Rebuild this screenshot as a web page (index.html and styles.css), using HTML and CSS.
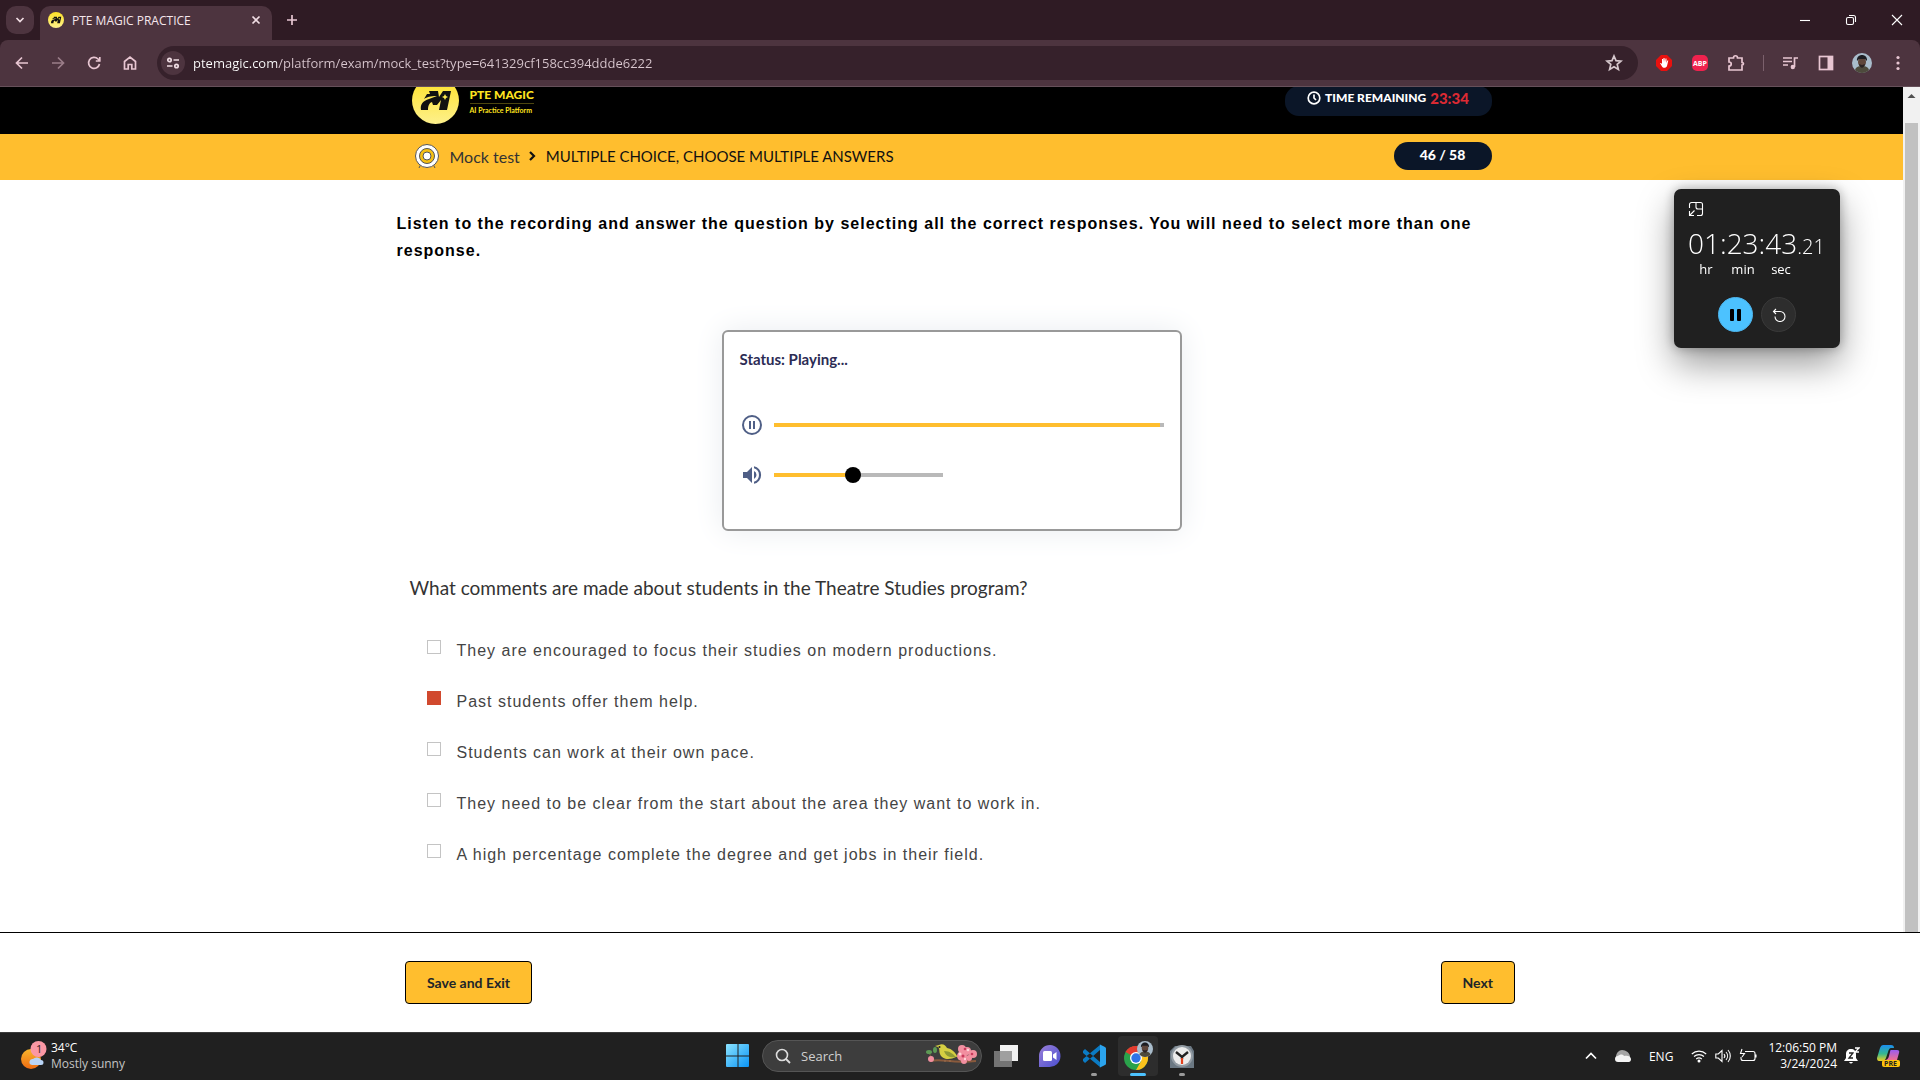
FILE: index.html
```html
<!DOCTYPE html>
<html lang="en">
<head>
<meta charset="utf-8">
<title>PTE MAGIC PRACTICE</title>
<link rel="stylesheet" href="styles.css">
</head>
<body>
<svg class="defs" width="0" height="0" aria-hidden="true">
  <defs>
    <linearGradient id="gold" x1="0" y1="0" x2="0" y2="1"><stop offset="0" stop-color="#ffe227"/><stop offset="1" stop-color="#fdf08c"/></linearGradient>
    <linearGradient id="win" x1="0" y1="0" x2="1" y2="1"><stop offset="0" stop-color="#8be3ff"/><stop offset="1" stop-color="#0a94f5"/></linearGradient>
    <linearGradient id="sun" x1="0" y1="0" x2="0" y2="1"><stop offset="0" stop-color="#f8b62d"/><stop offset="1" stop-color="#ee6b12"/></linearGradient>
    <linearGradient id="chat" x1="0" y1="0" x2="1" y2="1"><stop offset="0" stop-color="#9a7fd8"/><stop offset="1" stop-color="#4a4fd0"/></linearGradient>
    <linearGradient id="cpa" x1="0" y1="0" x2="0" y2="1"><stop offset="0" stop-color="#1b8ef0"/><stop offset=".55" stop-color="#35b890"/><stop offset="1" stop-color="#f0d020"/></linearGradient>
    <linearGradient id="cpb" x1="0" y1="0" x2="0" y2="1"><stop offset="0" stop-color="#9a5cf0"/><stop offset="1" stop-color="#f07090"/></linearGradient>
    <symbol id="logo" viewBox="0 0 47 47">
      <circle cx="23.500" cy="23.500" r="23.500" fill="url(#gold)"/>
      <path d="M17 14h9l1 6 4-6h8l-4 19h-8l2-10-4 5h-4l-1-3c-3 1-4 4-4 8H9c-1-6 2-9 8-11l8-3c-7 0-10 1-13 3l3-5h3z" fill="#111"/>
      <path d="M33 17l1 2 2 1-2 1-1 2-1-2-2-1 2-1z" fill="#fde94f"/>
    </symbol>
    <symbol id="person" viewBox="0 0 20 20">
      <circle cx="10" cy="10" r="10" fill="#a9bccb"/>
      <path d="M3 17c1-3 3-4 7-4s6 1 7 4c-4 4-10 4-14 0z" fill="#4d4a3c"/>
      <ellipse cx="10" cy="9" rx="4" ry="5" fill="#5e463b"/>
      <path d="M5 8c-1-8 11-8 10 0l-2-2H7z" fill="#1c1d22"/>
      <path d="M7 11c1 5 5 5 6 0l-3 1z" fill="#2a2324"/>
    </symbol>
  </defs>
</svg>

<header class="browser">
  <div class="tabstrip">
    <button class="tab-search" aria-label="Search tabs"><svg width="10" height="10" viewBox="0 0 10 10"><path d="M1.500 3L5 6.500 8.500 3" class="ln2"/></svg></button>
    <div class="tab">
      <svg width="16" height="16"><use href="#logo"/></svg>
      <span class="tab-title">PTE MAGIC PRACTICE</span>
      <button class="bare" aria-label="Close tab"><svg width="10" height="10" viewBox="0 0 10 10"><path d="M1.500 1.500l7 7m0-7l-7 7" class="ln2"/></svg></button>
    </div>
    <button class="bare new-tab" aria-label="New tab"><svg width="12" height="12" viewBox="0 0 12 12"><path d="M6 1v10M1 6h10" class="ln2 pink"/></svg></button>
    <div class="window-buttons">
      <button class="bare" aria-label="Minimize"><svg width="12" height="12" viewBox="0 0 12 12"><path d="M1 6.500h10" class="ln1"/></svg></button>
      <button class="bare" aria-label="Restore"><svg width="12" height="12" viewBox="0 0 12 12"><rect x="1.500" y="3.500" width="7" height="7" rx="1.500" class="ln1"/><path d="M4 1.500h4.500a2 2 0 0 1 2 2V8" class="ln1"/></svg></button>
      <button class="bare" aria-label="Close"><svg width="12" height="12" viewBox="0 0 12 12"><path d="M1 1l10 10M11 1L1 11" class="ln1"/></svg></button>
    </div>
  </div>
  <div class="toolbar">
    <div class="nav">
      <button class="bare" aria-label="Back"><svg width="16" height="16" viewBox="0 0 16 16"><path d="M14 8H3m5-5.500L2.500 8 8 13.500" class="ln2 pink"/></svg></button>
      <button class="bare dim" aria-label="Forward"><svg width="16" height="16" viewBox="0 0 16 16"><path d="M2 8h11M8 2.500L13.500 8 8 13.500" class="ln2 pink"/></svg></button>
      <button class="bare" aria-label="Reload"><svg width="16" height="16" viewBox="0 0 16 16"><path d="M13.500 9A5.500 5.500 0 1 1 12 4l1.500 1.500M13.800 2v4h-4" class="ln2 pink"/></svg></button>
      <button class="bare" aria-label="Home"><svg width="16" height="16" viewBox="0 0 16 16"><path d="M2.500 14V6.500L8 2l5.500 4.500V14h-3.700V9.500H6.200V14z" class="ln2 pink"/></svg></button>
    </div>
    <div class="omnibox">
      <button class="site-info" aria-label="Site information"><svg width="14" height="14" viewBox="0 0 14 14"><circle cx="3.500" cy="4" r="1.700" class="ln2"/><path d="M7.500 4H13M1 10h5.500" class="ln2"/><circle cx="10.500" cy="10" r="1.700" class="ln2"/></svg></button>
      <input class="url" type="text" aria-label="Address" value="ptemagic.com/platform/exam/mock_test?type=641329cf158cc394ddde6222">
      <button class="bare" aria-label="Bookmark"><svg width="18" height="18" viewBox="0 0 18 18"><path d="M9 2l2 4.700 5 .4-3.800 3.300 1.200 5L9 12.700l-4.400 2.700 1.200-5L2 7.100l5-.4z" class="ln2 grey"/></svg></button>
    </div>
    <div class="extensions">
      <button class="bare" aria-label="Ad blocker"><svg width="16" height="16" viewBox="0 0 16 16"><path d="M5 0h6l5 5v6l-5 5H5l-5-5V5z" fill="#e8110f"/><path d="M4 8l1 0 1 1V4h1v3l.5-4h1L9 7l.5-3.500h1V8l.8-2.500h1L11 11c-.6 2-4 2.500-5 .500z" fill="#fff"/></svg></button>
      <button class="bare abp">ABP</button>
      <button class="bare" aria-label="Extensions"><svg width="18" height="18" viewBox="0 0 18 18"><path d="M2 4h4.500c0-3 4-3 4 0H15v4.500c2 0 2 2.500 0 2.500v5H2v-4c3 0 3-4 0-4z" class="ln2 pink"/></svg></button>
      <span class="divider"></span>
      <button class="bare" aria-label="Media"><svg width="16" height="16" viewBox="0 0 16 16"><path d="M1 3h9M1 6.500h9M1 10h5M12.500 12V3H16" class="ln2 pink"/><circle cx="10.800" cy="12" r="2.200" fill="#e8c6d2"/></svg></button>
      <button class="bare" aria-label="Side panel"><svg width="16" height="16" viewBox="0 0 16 16"><rect x="1.500" y="1.500" width="13" height="13" class="ln2 pink"/><path d="M9.500 1H15v14H9.500z" fill="#e8c6d2"/></svg></button>
      <button class="bare" aria-label="Profile"><svg width="20" height="20"><use href="#person"/></svg></button>
      <button class="bare" aria-label="Menu"><svg width="16" height="16" viewBox="0 0 16 16" fill="#e8c6d2"><circle cx="8" cy="2.500" r="1.600"/><circle cx="8" cy="8" r="1.600"/><circle cx="8" cy="13.500" r="1.600"/></svg></button>
    </div>
  </div>
</header>

<div class="viewport">
  <div class="page">
    <div class="site-header">
      <div class="wrap">
        <a class="brand" href="#">
          <svg width="47" height="47"><use href="#logo"/></svg>
          <span class="brand-text"><span class="brand-name">PTE MAGIC</span><span class="brand-sub">AI Practice Platform</span></span>
        </a>
        <div class="pill timer">
          <svg width="14" height="14" viewBox="0 0 14 14"><circle cx="7" cy="7" r="5.800" class="ln2 white"/><path d="M7 3.500V7l2 2" class="ln2 white"/></svg>
          <span>TIME REMAINING</span><span class="time-left">23:34</span>
        </div>
      </div>
    </div>
    <nav class="crumbs">
      <div class="wrap">
        <svg width="28" height="26" viewBox="0 0 28 26"><path d="M8 21l-2 4M20 21l2 4" stroke="#555" fill="none"/><g stroke="#555"><circle cx="14" cy="13" r="11.500" fill="#fff"/><circle cx="14" cy="13" r="7.500" fill="#f5bf12"/><circle cx="14" cy="13" r="4" fill="#fff"/></g></svg>
        <a href="#">Mock test</a>
        <svg class="chev" width="8" height="10" viewBox="0 0 8 10"><path d="M2 1l4 4-4 4" fill="none" stroke="#111" stroke-width="2.200"/></svg>
        <span class="task-name">MULTIPLE CHOICE, CHOOSE MULTIPLE ANSWERS</span>
        <span class="pill count">46 / 58</span>
      </div>
    </nav>
    <main class="content">
      <h1 class="instruction">Listen to the recording and answer the question by selecting all the correct responses. You will need to select more than one response.</h1>
      <section class="player" aria-label="Audio player">
        <p class="status">Status: Playing...</p>
        <div class="player-row">
          <button class="bare" aria-label="Pause"><svg width="24" height="24" viewBox="0 0 24 24"><circle cx="12" cy="12" r="9" fill="none" stroke="#4f5f86" stroke-width="2"/><path d="M9 8h2v8H9zM13 8h2v8h-2z" fill="#4f5f86"/></svg></button>
          <progress class="track" max="100" value="99" aria-label="Playback"></progress>
        </div>
        <div class="player-row">
          <button class="bare" aria-label="Mute"><svg width="24" height="24" viewBox="0 0 24 24" fill="#4f5f86"><path d="M3 9v6h4l5 5V4L7 9zm13.500 3A4.500 4.500 0 0 0 14 8v8a4.500 4.500 0 0 0 2.500-4zM14 3.200v2.100a7 7 0 0 1 0 13.400v2.100a9 9 0 0 0 0-17.600z"/></svg></button>
          <input class="volume" type="range" min="0" max="100" value="47" aria-label="Volume">
        </div>
      </section>
      <fieldset class="question">
        <legend>What comments are made about students in the Theatre Studies program?</legend>
        <label><input type="checkbox"><span>They are encouraged to focus their studies on modern productions.</span></label>
        <label><input type="checkbox" checked><span>Past students offer them help.</span></label>
        <label><input type="checkbox"><span>Students can work at their own pace.</span></label>
        <label><input type="checkbox"><span>They need to be clear from the start about the area they want to work in.</span></label>
        <label><input type="checkbox"><span>A high percentage complete the degree and get jobs in their field.</span></label>
      </fieldset>
    </main>
  </div>
  <div class="scrollbar" aria-hidden="true">
    <svg width="17" height="36" viewBox="0 0 17 36"><path d="M4.500 11l4-4 4 4z" fill="#505050"/></svg>
    <div class="thumb"></div>
  </div>
</div>

<footer class="actions">
  <div class="actions-inner">
    <button class="action">Save and Exit</button>
    <button class="action">Next</button>
  </div>
</footer>

<aside class="stopwatch" aria-label="Stopwatch">
  <button class="bare" aria-label="Back to full view"><svg width="16" height="16" viewBox="0 0 16 16"><path d="M1.500 7V3.500a2 2 0 0 1 2-2h9a2 2 0 0 1 2 2v9a2 2 0 0 1-2 2H9M8 1.500V6a2 2 0 0 0 2 2h4.500M1.500 10v4.500H6M2 14l4.500-4.500" class="ln1"/></svg></button>
  <div class="clock">01:23:43<span>.21</span></div>
  <div class="units"><span>hr</span><span>min</span><span>sec</span></div>
  <div class="sw-buttons">
    <button class="round blue" aria-label="Pause stopwatch"><svg width="14" height="14" viewBox="0 0 14 14"><rect x="1" y="1" width="4" height="12" rx="1"/><rect x="8" y="1" width="4" height="12" rx="1"/></svg></button>
    <button class="round" aria-label="Reset stopwatch"><svg width="14" height="14" viewBox="0 0 14 14"><path d="M1.500 3.500H8a5 5 0 1 1-5 5M4 1L1.500 3.500 4 6" class="ln1"/></svg></button>
  </div>
</aside>

<div class="taskbar">
  <button class="bare weather">
    <svg width="26" height="30" viewBox="0 0 26 30"><circle cx="10" cy="18" r="10" fill="url(#sun)"/><path d="M11 24a3 3 0 0 1 1-6 5 5 0 0 1 8 1 2.500 2.500 0 0 1 0 5z" fill="#b9d4f6"/><circle cx="17.500" cy="8" r="8" fill="#fb98a4"/><text x="15" y="12" font-size="11" fill="#3a1a20">1</text></svg>
    <span class="two-lines"><span>34°C</span><span class="soft">Mostly sunny</span></span>
  </button>
  <div class="apps">
    <button class="app" aria-label="Start"><svg width="24" height="24" viewBox="0 0 24 24" fill="url(#win)"><path d="M1 0h10.500v11.500H0V1q0-1 1-1zM12.500 0H22q1 0 1 1v10.500H12.500zM0 12.500h11.500V23H1q-1 0-1-1zM12.500 12.500H23V22q0 1-1 1h-9.500z"/></svg></button>
    <label class="search">
      <svg width="16" height="16" viewBox="0 0 16 16"><circle cx="7" cy="7" r="5.500" fill="none" stroke="#ddd" stroke-width="1.600"/><path d="M11 11l4 4" stroke="#ddd" stroke-width="1.800"/></svg>
      <input type="text" placeholder="Search" aria-label="Search">
      <svg width="52" height="24" viewBox="0 0 52 24"><path d="M4 17c14-3 20 3 46 0" fill="none" stroke="#8a5a3c" stroke-width="2"/><path d="M9 17C5 13 4 10 2 8" fill="none" stroke="#7c6840"/><g fill="#5d9a55"><ellipse cx="3" cy="8" rx="3" ry="2"/><ellipse cx="9" cy="6" rx="2" ry="3"/></g><path d="M9 2l4-1c4-2 7 1 8 3 5 1 8 4 10 8l2 0-3 1c-6 3-14 3-16-3-1-3 0-5-2-7z" fill="#d6cf42"/><path d="M18 7c6 0 9 3 12 6-5 1-10 0-12-6z" fill="#8f9a35"/><path d="M19 16v2M24 16v2" stroke="#9a7050"/><circle cx="13.500" cy="3" r="1" fill="#222"/><g fill="#f28fa0"><circle cx="5" cy="15" r="3"/><circle cx="36" cy="5" r="4"/><circle cx="41" cy="7" r="4"/><circle cx="36" cy="12" r="5"/><circle cx="47" cy="10" r="4"/><circle cx="43" cy="14" r="3"/><circle cx="38" cy="17" r="3"/></g><g fill="#c93a5c"><circle cx="37" cy="12" r="1.500"/><circle cx="39" cy="5" r="1.300"/><circle cx="46" cy="10" r="1.300"/></g><g fill="#ffd4d8"><circle cx="34" cy="10" r="1.500"/><circle cx="42" cy="6" r="1.300"/><circle cx="39" cy="15" r="1.200"/></g></svg>
    </label>
    <button class="app" aria-label="Task view"><svg width="24" height="24" viewBox="0 0 24 24"><rect x="6" y="1" width="18" height="16" fill="#f2f2f2"/><rect x="0" y="7" width="18" height="16" fill="#8a8a8a" fill-opacity=".8"/></svg></button>
    <button class="app" aria-label="Chat"><svg width="24" height="24" viewBox="0 0 24 24"><path d="M12 1a11 11 0 1 1-1 22H1V12A11 11 0 0 1 12 1z" fill="url(#chat)"/><rect x="5" y="7" width="9" height="10" rx="1.500" fill="#fff"/><path d="M15 10.500l3.500-2.500v8L15 13.500z" fill="#fff"/></svg></button>
    <button class="app running" aria-label="Visual Studio Code"><svg width="24" height="24" viewBox="0 0 24 24"><path d="M1 7l2-2 15 13v5L1 9zM1 17l2 2L18 6V1L1 15z" fill="#0b7bc4"/><path d="M17 0l6 3q1 .5 1 1.500v15q0 1-1 1.500l-6 3c1 0 1-1 1-2V2c0-1 0-2-1-2z" fill="#2ba4ee"/></svg></button>
    <button class="app running active" aria-label="Chrome"><svg width="30" height="30" viewBox="0 0 30 30"><circle cx="13" cy="17" r="12" fill="#2aa24b"/><path d="M13 17L2.600 11A12 12 0 0 1 23.400 11z" fill="#e33b2e"/><path d="M2.600 11A12 12 0 0 1 13 5a12 12 0 0 1 10.400 6H13z" fill="#e33b2e"/><path d="M13 11h10.400A12 12 0 0 1 13 29l5.200-9z" fill="#fcc31d"/><circle cx="13" cy="17" r="6" fill="#fff"/><circle cx="13" cy="17" r="4.700" fill="#2f73e6"/><use href="#person" x="14" y="0" width="16" height="16"/></svg></button>
    <button class="app running" aria-label="Clock"><svg width="24" height="24" viewBox="0 0 24 24"><path d="M5 2h16l3 5v17H0V7z" fill="#6b7883"/><circle cx="12" cy="12" r="11" fill="#929ba3"/><circle cx="12" cy="12" r="9" fill="#ececec"/><path d="M6 8l6 5 6-5M12 12v3" stroke="#222" stroke-width="2.400" fill="none"/><path d="M12 14v6" stroke="#e2401c" stroke-width="2.200"/></svg></button>
  </div>
  <div class="tray">
    <button class="bare" aria-label="Hidden icons"><svg width="12" height="12" viewBox="0 0 12 12"><path d="M1 8.500l5-5 5 5" class="ln2 white"/></svg></button>
    <svg width="16" height="12" viewBox="0 0 16 12"><path d="M1 7C1 3 4 0 7 0c4 0 8 3 8 7z" fill="#a5a5a5"/><path d="M3 12a3 3 0 0 1 0-6c2-2 5-2 6 0 3-1 7 0 7 3s-2 3-3 3z" fill="#f4f4f4"/></svg>
    <span class="lang">ENG</span>
    <button class="bare status-icons" aria-label="Network, volume, battery">
      <svg width="16" height="16" viewBox="0 0 16 16"><path d="M.8 6a10.500 10.500 0 0 1 14.400 0M3 8.500a7.500 7.500 0 0 1 10 0M5.200 11a4.500 4.500 0 0 1 5.600 0" class="ln1"/><circle cx="8" cy="13" r="1.500" fill="#fff"/></svg>
      <svg width="16" height="16" viewBox="0 0 16 16"><path d="M.8 6v4h2.500L7 13.500v-11L3.300 6zM9 6a3 3 0 0 1 0 4M11 4a6 6 0 0 1 0 8M13 2a9 9 0 0 1 0 12" class="ln1"/></svg>
      <svg width="18" height="16" viewBox="0 0 18 16"><path d="M6 3.500h8a2 2 0 0 1 2 2v5a2 2 0 0 1-2 2H4a2 2 0 0 1-2-2V9M17 6.500v3M3 1L1.500 5.500h4L3 9" class="ln1"/></svg>
    </button>
    <button class="bare two-lines date"><span>12:06:50 PM</span><span>3/24/2024</span></button>
    <svg width="16" height="18" viewBox="0 0 16 18"><path d="M7 2c-3 0-5 2-5 5v4l-2 3h14l-2-3V7c0-3-2-5-5-5zM5 15h4q-2 3-4 0z" fill="#fff"/><path d="M5 6h4l-4 5h4" stroke="#222" fill="none" stroke-width="1.300"/><path d="M11 1h4l-4 4h4" stroke="#fff" fill="none" stroke-width="1.300"/></svg>
    <button class="bare copilot" aria-label="Copilot"><svg width="24" height="24" viewBox="0 0 24 24"><path d="M6 1h8q3 0 3 3l-3 0q-2 0-3 4l-2 6q-1 3-4 3H2q-2 0-2-3L3 4q1-3 3-3z" fill="url(#cpa)"/><path d="M14 6h6q3 0 2 3l-2 7H8q3 0 4-4l1-4q0-2 1-2z" fill="url(#cpb)"/><rect x="5" y="16" width="18" height="7" rx="2" fill="#ffc40c"/><text x="7" y="22" font-size="7" font-weight="700" fill="#222">PRE</text></svg></button>
  </div>
</div>
</body>
</html>
```
FILE: styles.css
```css
* { box-sizing: border-box; }
body {
  margin: 0;
  min-height: 100vh;
  display: flex;
  flex-direction: column;
  background: #fff;
  color: #212529;
  font-family: "Open Sans", "Noto Sans", sans-serif;
  font-size: 12px;
}
.defs { position: absolute; }
svg { display: block; flex: none; }
button, input { font: inherit; color: inherit; }
.bare { border: 0; padding: 0; background: none; display: flex; align-items: center; justify-content: center; }
.ln1 { fill: none; stroke: #fff; stroke-width: 1.1; }
.ln2 { fill: none; stroke: #f0dde4; stroke-width: 1.7; }
.pink { stroke: #e8c6d2; }
.grey { stroke: #d6c8cd; }
.white { stroke: #fff; }

/* Browser frame */
.browser { background: #2f1b24; color: #f5e6ec; }
.tabstrip { display: flex; align-items: center; height: 40px; padding: 6px 0 0 6px; }
.tab-search { align-self: flex-start; width: 28px; height: 28px; border: 0; border-radius: 10px; background: #4d343f; display: flex; align-items: center; justify-content: center; padding: 0; }
.tab { display: flex; align-items: center; gap: 8px; width: 232px; height: 34px; margin-left: 6px; padding: 0 11px 6px 8px; border-radius: 10px 10px 0 0; background: #4d343f; }
.tab-title { flex: 1; }
.new-tab { width: 28px; height: 28px; margin: 0 0 6px 6px; }
.window-buttons { margin-left: auto; display: flex; padding-bottom: 6px; }
.window-buttons .bare { width: 46px; height: 28px; }
.toolbar { display: flex; align-items: center; height: 47px; background: #4d343f; border-bottom: 1px solid #66505a; border-radius: 8px 8px 0 0; }
.nav { display: flex; gap: 20px; padding: 0 19px 0 14px; }
.dim { opacity: .5; }
.omnibox { flex: 1; display: flex; align-items: center; height: 34px; padding: 0 15px 0 4px; border-radius: 17px; background: #36212b; }
.site-info { width: 24px; height: 24px; border: 0; padding: 0; border-radius: 12px; background: #4d343f; display: flex; align-items: center; justify-content: center; }
.url { flex: 1; border: 0; padding: 0 0 0 8px; font-size: 13px; color: transparent; background: linear-gradient(90deg, #fff 92px, #d9c7cf 92px); background-clip: text; -webkit-background-clip: text; }
.extensions { display: flex; align-items: center; padding: 0 4px 0 8px; }
.extensions .bare { width: 36px; }
.extensions .abp { width: 16px; height: 16px; margin: 0 10px; border-radius: 5px; background: #f0224e; color: #fff; font-size: 7px; font-weight: 700; }
.divider { width: 1px; height: 16px; margin: 0 8px 0 9px; background: #7b606c; }

/* Scrolled web page */
.viewport { flex: 1; display: flex; }
.page { flex: 1; font-family: Lato, sans-serif; }
.wrap { display: flex; width: 100%; max-width: 1080px; margin: 0 auto; }
.site-header { height: 47px; overflow: hidden; display: flex; align-items: flex-end; background: #000; }
.site-header .wrap { align-items: center; justify-content: space-between; padding-bottom: 10px; }
.brand { display: flex; align-items: center; gap: 11px; color: #ffe41f; text-decoration: none; }
.brand-text { display: flex; flex-direction: column; padding-top: 2px; }
.brand-name { font-size: 12px; line-height: 15px; font-weight: 900; padding-bottom: 1px; border-bottom: 1px solid #4d460f; }
.brand-sub { font-size: 7px; line-height: 13px; font-weight: 700; }
.pill { display: flex; align-items: center; justify-content: center; gap: 4px; height: 28px; padding-bottom: 3px; border-radius: 14px; background: #0b1628; color: #fff; font-size: 12px; font-weight: 900; }
.timer { width: 207px; height: 30px; padding-bottom: 6px; }
.time-left { color: #dc2a33; font-size: 15px; }
.crumbs { background: #ffbe2e; color: #111; font-size: 16px; }
.crumbs .wrap { align-items: center; height: 46px; padding-left: 1px; padding-bottom: 2px; }
.crumbs a { color: #333; text-decoration: none; margin-left: 9px; }
.crumbs .chev { margin: 0 10px 0 8px; }
.crumbs .task-name { font-size: 15px; }
.count { width: 98px; margin-left: auto; font-size: 14px; }
.content { max-width: 1110px; margin: 0 auto; padding: 30px 0; font-family: "Liberation Sans", Arial, sans-serif; }
.instruction { margin: 0 0 66px; font-size: 16px; line-height: 27px; font-weight: 700; letter-spacing: 1px; color: #000; }
.player { max-width: 460px; height: 201px; margin: 0 auto; padding: 15px 16px; border: 2px solid #999; border-radius: 6px; background: #fff; box-shadow: 0 0 30px #e9ecf0; font-family: Lato, sans-serif; }
.status { margin: 0 0 42px; font-size: 15px; line-height: 24px; font-weight: 700; color: #2c2c54; }
.player-row { display: flex; align-items: center; gap: 10px; height: 24px; margin-bottom: 26px; }
.track { flex: 1; height: 4px; border: 0; appearance: none; -webkit-appearance: none; }
.track::-webkit-progress-bar { background: #b9b9b9; }
.track::-webkit-progress-value { background: #ffbe2e; }
.volume { width: 169px; height: 16px; margin: 0; appearance: none; -webkit-appearance: none; background: linear-gradient(90deg, #ffbe2e 47%, #b9b9b9 47%) center / 100% 4px no-repeat; }
.volume::-webkit-slider-thumb { -webkit-appearance: none; width: 16px; height: 16px; border-radius: 8px; background: #000; }
.question { margin: 43px 0 0; padding: 0 13px; border: 0; }
.question legend { padding: 0; margin-bottom: 37px; font-family: Lato, sans-serif; font-size: 19px; line-height: 27px; color: #333; }
.question label { display: flex; gap: 16px; margin-left: 17px; padding-bottom: 25px; font-size: 16px; line-height: 26px; letter-spacing: 1px; color: #444; }
.question input { appearance: none; width: 14px; height: 14px; margin: 2px 0 0; border: 1px solid #c4c4c4; background: #fff; }
.question input:checked { border-color: #d1492e; background: #d1492e; }
.scrollbar { width: 17px; display: flex; flex-direction: column; background: #f1f1f1; }
.thumb { flex: 1; margin: 0 2px; background: #c1c1c1; }
.actions { padding: 28px 0; border-top: 1px solid #000; background: #fff; }
.actions-inner { display: flex; justify-content: space-between; max-width: 1110px; margin: 0 auto; }
.action { height: 43px; padding: 0 21px; border: 1px solid #000; border-radius: 4px; background: #ffbe2e; font-family: Lato, sans-serif; font-size: 14px; font-weight: 700; }

/* Always-on-top stopwatch window */
.stopwatch { position: fixed; top: 189px; right: 80px; width: 166px; height: 159px; padding: 12px 14px; border-radius: 7px; background: #202020; color: #fff; box-shadow: 0 16px 36px rgba(0, 0, 0, .4), 0 0 12px rgba(0, 0, 0, .3); }
.clock { margin-top: 12px; font-size: 28px; line-height: 28px; font-weight: 300; white-space: nowrap; }
.clock span { font-size: 20px; }
.units { display: grid; grid-template-columns: 36px 38px 38px; font-size: 13px; line-height: 16px; text-align: center; }
.sw-buttons { display: flex; justify-content: center; gap: 8px; margin-top: 20px; }
.round { width: 35px; height: 35px; padding: 0; border: 1px solid #3a3a3a; border-radius: 50%; background: #2d2d2d; display: flex; align-items: center; justify-content: center; }
.blue { background: #4cc2ff; border-color: #4cb4ec; }

/* Taskbar */
.taskbar { display: grid; grid-template-columns: 1fr auto 1fr; align-items: center; height: 48px; box-shadow: inset 0 1px #3c3c3c; background: #202020; color: #fff; }
.weather { justify-self: start; gap: 4px; padding-left: 21px; }
.two-lines { display: flex; flex-direction: column; align-items: flex-start; line-height: 16px; }
.soft { color: #c4c4c4; }
.apps { display: flex; align-items: center; gap: 4px; }
.app { position: relative; width: 40px; height: 40px; padding: 0; border: 0; border-radius: 4px; background: none; display: flex; align-items: center; justify-content: center; }
.search { display: flex; align-items: center; gap: 10px; width: 220px; height: 32px; padding: 0 3px 0 12px; border: 1px solid #555; border-radius: 16px; background: #3d3d3d; }
.search input { flex: 1; min-width: 0; border: 0; padding: 0; background: none; font-size: 13px; }
.search input::placeholder { color: #d0d0d0; }
.running::after { content: ""; position: absolute; bottom: 0; left: 17px; width: 6px; height: 3px; border-radius: 2px; background: #9a9a9a; }
.active { background: #2d2d2d; }
.active::after { left: 12px; width: 16px; background: #4cc2ff; }
.tray { justify-self: end; display: flex; align-items: center; padding-right: 19px; }
.lang { margin: 0 18px; }
.tray > svg:first-of-type { margin-left: 18px; }
.status-icons { gap: 8px; }
.date { align-items: flex-end; margin: 0 7px 0 11px; }
.copilot { margin-left: 17px; }
```
